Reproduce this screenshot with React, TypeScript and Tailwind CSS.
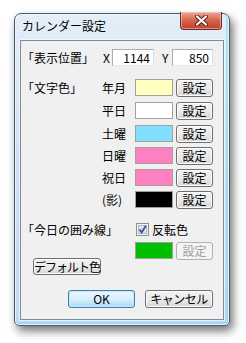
import React from "react";

const jp = { fontFamily: '"Noto Sans CJK JP", "Noto Sans", sans-serif' };

const rows = [
  { label: "年月", color: "bg-[#ffffc0]", h: "h-[23px]" },
  { label: "平日", color: "bg-white", h: "h-[23px]" },
  { label: "土曜", color: "bg-[#80dfff]", h: "h-[22px]" },
  { label: "日曜", color: "bg-[#ff80c0]", h: "h-[22px]" },
  { label: "祝日", color: "bg-[#ff80c0]", h: "h-[22px]" },
  { label: "(影)", color: "bg-black", h: "h-[17px]" },
];

function Button({ children, className = "" }: { children: React.ReactNode; className?: string }) {
  return (
    <div
      className={`flex items-center justify-center whitespace-nowrap rounded-[3px] border border-[#707070] bg-gradient-to-b from-[#f2f2f2] via-[#ebebeb] to-[#d6d6d6] text-[12px] leading-none text-black shadow-[inset_0_0_0_1px_#fcfcfc] ${className}`}
    >
      {children}
    </div>
  );
}

function Swatch({ color }: { color: string }) {
  return <div className={`h-[17px] w-[38px] border border-[#a0a0a0] ${color}`} />;
}

export default function App() {
  return (
    <div className="h-[343px] w-[246px] overflow-hidden bg-white pl-[14px] pt-[13px]" style={jp}>
      <div className="flex h-[313px] w-[216px] flex-col rounded-t-[7px] rounded-b-[5px] border border-[#4a5a6c] bg-gradient-to-b from-[#e4eef9] via-[#cfe0f3] to-[#c4d8ef] px-[5px] pb-[5px] shadow-[3px_5px_10px_rgba(0,0,0,0.55),inset_0_0_0_1px_rgba(255,255,255,0.7),inset_-1px_-1px_0_2px_rgba(120,215,245,0.5)]">
        {/* title bar */}
        <div className="flex h-[26px] items-start justify-between pl-[2px] pr-[2px]">
          <span className="mt-[5px] text-[12px] leading-[14px] text-black">カレンダー設定</span>
          <div className="-mt-[2px] flex h-[18px] w-[42px] items-center justify-center rounded-b-[4px] border border-t-0 border-[#6a2b22] bg-gradient-to-b from-[#e9a99a] via-[#d46449] to-[#c0402a] shadow-[inset_0_0_0_1px_rgba(255,220,210,0.5)]">
            <svg width="13" height="11" viewBox="0 0 13 11">
              <path d="M2 1.5 L11 9.5 M11 1.5 L2 9.5" stroke="#5a1d14" strokeWidth="4" strokeLinecap="round" />
              <path d="M2 1.5 L11 9.5 M11 1.5 L2 9.5" stroke="#ffffff" strokeWidth="2.2" strokeLinecap="round" />
            </svg>
          </div>
        </div>

        {/* client area */}
        <div className="flex h-[280px] w-[204px] flex-col border border-[#7d8c9c] bg-[#f0f0f0] text-[12px] text-black shadow-[0_0_0_1px_rgba(255,255,255,0.6)]">
          {/* position row */}
          <div className="mt-[8px] flex h-[17px] items-center pl-[1px]">
            <span className="w-[81px] leading-[17px]">「表示位置」</span>
            <span className="w-[9px] leading-[17px]">X</span>
            <div className="flex h-[17px] w-[42px] items-center justify-end border border-[#abadb3] border-b-[#e3e9ef] border-r-[#dbdfe6] bg-white pr-[3px] leading-none">1144</div>
            <span className="ml-[8px] w-[10px] leading-[17px]">Y</span>
            <div className="flex h-[17px] w-[41px] items-center justify-end border border-[#abadb3] border-b-[#e3e9ef] border-r-[#dbdfe6] bg-white pr-[3px] leading-none">850</div>
          </div>

          {/* text colors */}
          <div className="mt-[13px] flex flex-col">
            {rows.map((r, i) => (
              <div key={r.label} className={`flex items-start pl-[1px] ${r.h}`}>
                <span className="w-[80px] leading-[17px]">{i === 0 ? "「文字色」" : ""}</span>
                <span className="w-[33px] leading-[17px]">{r.label}</span>
                <Swatch color={r.color} />
                <Button className="ml-[3px] h-[18px] w-[37px]">設定</Button>
              </div>
            ))}
          </div>

          {/* today frame */}
          <div className="mt-[13px] flex h-[17px] items-center pl-[1px]">
            <span className="w-[113px] leading-[17px]">「今日の囲み線」</span>
            <svg width="13" height="13" viewBox="0 0 13 13" className="ml-[1px]">
              <rect x="0.5" y="0.5" width="12" height="12" fill="#f4f4f4" stroke="#8e8f8f" />
              <rect x="2.5" y="2.5" width="8" height="8" fill="#dfe3ea" stroke="#b4b9c2" />
              <path d="M3.5 6.5 L5.7 9.5 L9.8 2.8" stroke="#3a4f95" strokeWidth="1.8" fill="none" />
            </svg>
            <span className="ml-[3px] leading-[17px]">反転色</span>
          </div>

          <div className="mt-[4px] flex items-start pl-[1px]">
            <div className="w-[113px] pl-[11px] pt-[16px]">
              <Button className="h-[17px] w-[68px] tracking-[-1px]">デフォルト色</Button>
            </div>
            <Swatch color="bg-[#00c000]" />
            <div className="ml-[3px] flex h-[18px] w-[37px] items-center justify-center rounded-[3px] border border-[#adb2b5] bg-[#f4f4f4] leading-none text-[#a0a0a0]">
              設定
            </div>
          </div>

          {/* OK / Cancel */}
          <div className="mt-[15px] flex items-start pl-[47px]">
            <div className="flex h-[18px] w-[67px] items-center justify-center rounded-[3px] border border-[#3c7fb1] bg-gradient-to-b from-[#eaf6fd] via-[#d9f0fc] to-[#a7d9f5] leading-none shadow-[inset_0_0_0_1px_#c4e9fb]">
              OK
            </div>
            <Button className="ml-[10px] h-[18px] w-[68px] tracking-[-0.5px]">キャンセル</Button>
          </div>
        </div>
      </div>
    </div>
  );
}
